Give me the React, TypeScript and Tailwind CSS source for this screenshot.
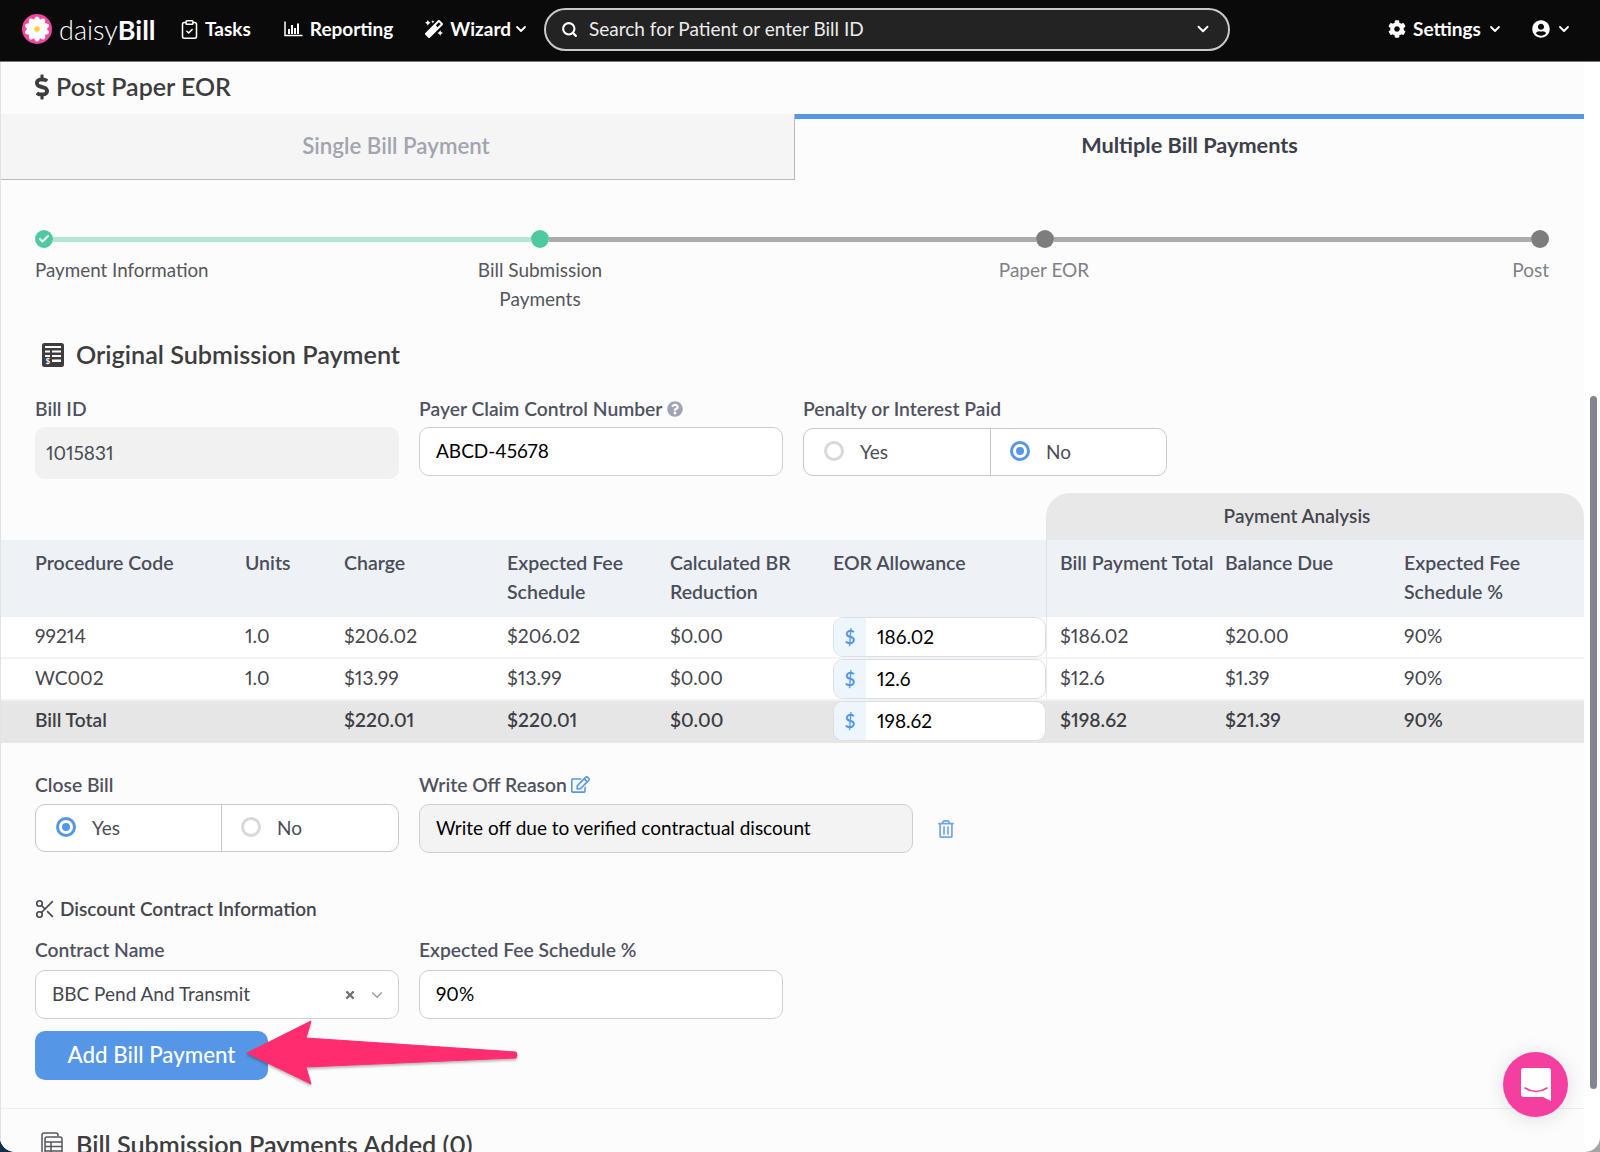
import * as React from 'react';
import { ChevronDown, ClipboardCheck, Scissors, Check } from 'lucide-react';
import { FaCog, FaUserCircle, FaMagic, FaQuestionCircle, FaRegEdit, FaRegTrashAlt, FaDollarSign, FaTimes } from 'react-icons/fa';
import { FiSearch } from 'react-icons/fi';

function DaisyLogo() {
  const petals = [0, 36, 72, 108, 144, 180, 216, 252, 288, 324];
  return (
    <svg width="30" height="30" viewBox="0 0 30 30" className="shrink-0">
      <circle cx="15" cy="15" r="15" fill="#f2459f" />
      {petals.map((a) => (
        <ellipse key={a} cx="15" cy="8" rx="3.2" ry="5.6" fill="#fff" transform={`rotate(${a} 15 15)`} />
      ))}
      <circle cx="15" cy="15" r="2.8" fill="#fbd13a" />
    </svg>
  );
}

function ReportingIcon() {
  return (
    <svg width="19" height="16" viewBox="0 0 19 16" fill="none" stroke="#fff" className="shrink-0">
      <path d="M1 0.5V14.5H18.5" strokeWidth="1.5" />
      <path d="M5 13V8M8 13V4M11 13V7M14 13V2.5" strokeWidth="2" />
    </svg>
  );
}

function LedgerIcon() {
  return (
    <svg width="22" height="24" viewBox="0 0 22 24" className="shrink-0">
      <rect x="0" y="0" width="22" height="24" rx="2.5" fill="#3d3d40" />
      <rect x="3" y="3" width="16" height="2" fill="#fcfcfc" />
      <rect x="3" y="7.5" width="5" height="2" fill="#fcfcfc" />
      <rect x="10" y="7.5" width="9" height="2" fill="#fcfcfc" />
      <rect x="10" y="12" width="9" height="2" fill="#fcfcfc" />
      <rect x="3" y="12" width="5" height="2" fill="#fcfcfc" />
      <rect x="10" y="16.5" width="9" height="2.5" fill="#fcfcfc" />
      <text x="3.5" y="21" fontSize="8" fontWeight="700" fill="#fcfcfc" fontFamily="Lato, sans-serif">$</text>
    </svg>
  );
}

function LedgerOutlineIcon() {
  return (
    <svg width="22" height="24" viewBox="0 0 22 24" fill="none" stroke="#55565e" strokeWidth="1.5" className="shrink-0">
      <path d="M1 20V3A2 2 0 0 1 3 1H15A2 2 0 0 1 17 3V4" />
      <rect x="4" y="5" width="17" height="18" rx="2" />
      <path d="M4 10H21M4 14.5H21M4 19H21M10 10V23" />
    </svg>
  );
}

function NavItem({ icon, label, chevron }: { icon: React.ReactNode; label: string; chevron?: string }) {
  return (
    <div className="flex items-center gap-[7px] text-white text-[19px] font-bold">
      {icon}
      <span>{label}</span>
      {chevron && <ChevronDown size={16} strokeWidth={2.75} className={chevron} />}
    </div>
  );
}

function Radio({ on }: { on?: boolean }) {
  return on ? (
    <span className="-mt-[3px] w-5 h-5 rounded-full border-[3px] border-[#5596e6] bg-white flex items-center justify-center shrink-0">
      <span className="w-2 h-2 rounded-full bg-[#5596e6]" />
    </span>
  ) : (
    <span className="-mt-[3px] w-5 h-5 rounded-full border-[3px] border-[#d8d8d8] bg-white shrink-0" />
  );
}

function RadioToggle({ yes, firstWidth, width }: { yes: boolean; firstWidth: string; width: string }) {
  return (
    <div className={`flex h-12 rounded-[10px] border border-[#c9c9cc] bg-white text-[19px] text-[#4a4c55] ${width}`}>
      <div className={`flex items-center gap-[16px] pl-[20px] border-r border-[#c9c9cc] ${firstWidth}`}>
        <Radio on={yes} />
        <span>Yes</span>
      </div>
      <div className="flex items-center gap-[16px] pl-[19px] flex-1">
        <Radio on={!yes} />
        <span>No</span>
      </div>
    </div>
  );
}

function Label({ children }: { children: React.ReactNode }) {
  return <div className="flex items-center h-[26px] pt-[1px] text-[19.3px] font-semibold text-[#50525f] leading-none">{children}</div>;
}

function TextInput({ value, className = '' }: { value: string; className?: string }) {
  return (
    <div className={`flex items-center pl-[16px] h-[49px] rounded-[10px] border border-[#cfcfd2] text-[19px] text-black ${className}`}>
      {value}
    </div>
  );
}

const cols = 'grid grid-cols-[35px_210px_99px_163px_163px_163px_213px_179px_179px_1fr]';

function Money({ value }: { value: string }) {
  return (
    <div className="flex h-10 rounded-[10px] border border-[#dedee2] bg-white overflow-hidden text-black text-[19px] font-normal w-[213px]">
      <span className="w-[32px] flex items-center justify-center bg-[#edf5fd] text-[#5596e6] font-semibold">$</span>
      <span className="flex items-center pl-[11px]">{value}</span>
    </div>
  );
}

type Row = { code: string; units: string; charge: string; fee: string; br: string; eor: string; total: string; bal: string; pct: string; sum?: boolean };

const rows: Row[] = [
  { code: '99214', units: '1.0', charge: '$206.02', fee: '$206.02', br: '$0.00', eor: '186.02', total: '$186.02', bal: '$20.00', pct: '90%' },
  { code: 'WC002', units: '1.0', charge: '$13.99', fee: '$13.99', br: '$0.00', eor: '12.6', total: '$12.6', bal: '$1.39', pct: '90%' },
  { code: 'Bill Total', units: '', charge: '$220.01', fee: '$220.01', br: '$0.00', eor: '198.62', total: '$198.62', bal: '$21.39', pct: '90%', sum: true },
];

function TableRow({ r }: { r: Row }) {
  return (
    <div className={`${cols} items-center h-[42px] text-[19.2px] ${r.sum ? 'bg-[#e6e6e6] pb-[2px] font-semibold text-[#3e3f46]' : 'bg-white border-b-2 border-[#f2f3f5] text-[#45464e]'}`}>
      <div />
      <div className="pb-[2px]">{r.code}</div>
      <div className="pb-[2px]">{r.units}</div>
      <div className="pb-[2px]">{r.charge}</div>
      <div className="pb-[2px]">{r.fee}</div>
      <div className="pb-[2px]">{r.br}</div>
      <Money value={r.eor} />
      <div className="pl-[13px] pb-[2px] self-stretch flex items-center border-l border-[#e9e9ec]">{r.total}</div>
      <div className="pb-[2px]">{r.bal}</div>
      <div className="pb-[2px]">{r.pct}</div>
    </div>
  );
}

export default function App() {
  return (
    <div className="relative w-[1600px] h-[1152px] overflow-hidden bg-white font-['Lato','Liberation_Sans',sans-serif] text-[#3d3d40] proportional-nums">
      {/* window corners behind the page */}
      <div className="absolute left-0 bottom-0 w-6 h-6 bg-[#123048]" />
      <div className="absolute right-0 bottom-0 w-6 h-6 bg-[#a5a5a8]" />

      <div className="relative h-full rounded-b-[15px] overflow-hidden bg-white">
        {/* top bar */}
        <header className="h-[62px] bg-[#0a0a0a] border-b border-[#777] flex items-center pl-[22px] pb-[3px]">
          <DaisyLogo />
          <div className="ml-[7px] w-[95px] text-white text-[27px] leading-none font-light">
            daisy<span className="font-bold">Bill</span>
          </div>
          <div className="ml-[27px]">
            <NavItem icon={<ClipboardCheck size={21} strokeWidth={1.75} className="shrink-0 -mx-[2px]" />} label="Tasks" />
          </div>
          <div className="ml-[33px]">
            <NavItem icon={<ReportingIcon />} label="Reporting" />
          </div>
          <div className="ml-[32px]">
            <NavItem icon={<FaMagic size={18} className="shrink-0" />} label="Wizard" chevron="-ml-[5px]" />
          </div>
          <div className="ml-[15px] w-[686px] h-[43px] rounded-full border-2 border-[#c9c9c9] bg-[#232323] flex items-center pl-[15px] pr-[16px] text-white text-[19px]">
            <FiSearch size={17} strokeWidth={3} />
            <span className="ml-[11px] flex-1 text-[#ececec]">Search for Patient or enter Bill ID</span>
            <ChevronDown size={18} strokeWidth={2.5} />
          </div>
          <div className="ml-[158px]">
            <NavItem icon={<FaCog size={18} className="shrink-0" />} label="Settings" chevron="-ml-[1px]" />
          </div>
          <div className="ml-[29px] flex items-center gap-[6px] text-white">
            <FaUserCircle size={18} />
            <ChevronDown size={16} strokeWidth={2.75} />
          </div>
        </header>

        <main className="w-[1584px] h-[1090px] overflow-hidden bg-[#fcfcfc] border-l border-[#e3e3e3]">
          <div className="-ml-px h-[52px] pl-[35px] pb-[3px] flex items-center gap-[7px] text-[25px] font-semibold text-[#3d3d40]">
            <FaDollarSign className="w-[14px] h-[26px] shrink-0" />
            <h1>Post Paper EOR</h1>
          </div>

          {/* tabs */}
          <div className="-ml-px flex h-[66px]">
            <div className="w-[795px] bg-[#f5f5f6] border-r border-b border-[#b9b9bd] pb-[2px] pr-[2px] flex items-center justify-center text-[22.3px] text-[#a2a4ae] font-semibold">
              Single Bill Payment
            </div>
            <div className="flex-1 border-t-[5px] border-[#5596e6] pb-[8px] flex items-center justify-center text-[21.7px] text-[#3d3f4b] font-bold">
              Multiple Bill Payments
            </div>
          </div>

          {/* stepper */}
          <div className="-ml-px pl-[35px] pt-[50px]">
            <div className="flex items-center h-[18px]">
              <span className="w-[18px] h-[18px] rounded-full bg-[#4fc9a0] flex items-center justify-center text-white shrink-0">
                <Check size={12} strokeWidth={4} />
              </span>
              <span className="w-[478px] h-[5px] bg-[#b5e5d3]" />
              <span className="w-[18px] h-[18px] rounded-full bg-[#4fc9a0] shrink-0" />
              <span className="w-[487px] h-[5px] bg-[#ababab]" />
              <span className="w-[18px] h-[18px] rounded-full bg-[#7d7d7d] shrink-0" />
              <span className="w-[477px] h-[5px] bg-[#ababab]" />
              <span className="w-[18px] h-[18px] rounded-full bg-[#7d7d7d] shrink-0" />
            </div>
            <div className="flex mt-[7px] text-[19px] leading-[29px] text-[#55565e]">
              <div className="w-[405px] text-[18.8px]">Payment Information</div>
              <div className="w-[200px] text-center">
                Bill Submission
                <br />
                Payments
              </div>
              <div className="ml-[304px] w-[200px] text-center text-[#808088]">Paper EOR</div>
              <div className="w-[405px] text-right text-[#808088]">Post</div>
            </div>
          </div>

          {/* original submission */}
          <div className="-ml-px pl-[42px] mt-[26px] flex items-center gap-[12px] h-[32px]">
            <LedgerIcon />
            <h2 className="text-[25.2px] font-semibold text-[#3d3d40]">Original Submission Payment</h2>
          </div>

          <div className="-ml-px pl-[35px] mt-[24px] flex gap-[20px]">
            <div className="w-[364px]">
              <Label>Bill ID</Label>
              <div className="mt-[6px] h-[52px] rounded-[10px] bg-[#f1f1f1] flex items-center pl-[11px] text-[19px] text-[#4a4c55]">1015831</div>
            </div>
            <div className="w-[364px]">
              <Label>
                Payer Claim Control Number
                <FaQuestionCircle size={16} className="ml-[5px] text-[#9fa3b3]" />
              </Label>
              <TextInput value="ABCD-45678" className="mt-[6px] bg-white" />
            </div>
            <div className="w-[364px]">
              <Label>Penalty or Interest Paid</Label>
              <div className="mt-[7px]">
                <RadioToggle yes={false} firstWidth="w-[187px]" width="w-[364px]" />
              </div>
            </div>
          </div>

          {/* payment table */}
          <div className="-ml-px mt-[14px] w-[1584px]">
            <div className="ml-[1046px] h-[47px] pr-[36px] rounded-t-[24px] bg-[#e8e8e8] flex items-center justify-center text-[19px] font-semibold text-[#45464e]">
              Payment Analysis
            </div>
            <div className={`${cols} h-[77px] bg-[#eef1f6] text-[19.5px] font-semibold leading-[28.5px] text-[#4a4d5a]`}>
              <div />
              <div className="pt-[9px]">Procedure Code</div>
              <div className="pt-[9px]">Units</div>
              <div className="pt-[9px]">Charge</div>
              <div className="pt-[9px]">
                Expected Fee
                <br />
                Schedule
              </div>
              <div className="pt-[9px]">
                Calculated BR
                <br />
                Reduction
              </div>
              <div className="pt-[9px]">EOR Allowance</div>
              <div className="pt-[9px] pl-[13px] border-l border-[#dfe1e6] whitespace-nowrap">Bill Payment Total</div>
              <div className="pt-[9px]">Balance Due</div>
              <div className="pt-[9px]">
                Expected Fee
                <br />
                Schedule %
              </div>
            </div>
            {rows.map((r) => (
              <TableRow key={r.code} r={r} />
            ))}
          </div>

          {/* close bill */}
          <div className="-ml-px pl-[35px] mt-[28px] flex gap-[20px]">
            <div className="w-[364px]">
              <Label>Close Bill</Label>
              <div className="mt-[7px]">
                <RadioToggle yes firstWidth="w-[186px]" width="w-[364px]" />
              </div>
            </div>
            <div className="w-[494px]">
              <Label>
                Write Off Reason
                <FaRegEdit size={19} className="ml-[4px] text-[#5596e6]" />
              </Label>
              <TextInput value="Write off due to verified contractual discount" className="mt-[7px] bg-[#f3f3f3]" />
            </div>
            <div className="pt-[49px] pl-[4px]">
              <FaRegTrashAlt size={18} className="text-[#6fa6ec]" />
            </div>
          </div>

          <div className="-ml-px pl-[34px] mt-[43px] flex items-center gap-[4px] h-[26px] text-[19px] font-semibold text-[#45464e]">
            <Scissors size={22} strokeWidth={1.75} className="shrink-0" />
            Discount Contract Information
          </div>

          <div className="-ml-px pl-[35px] mt-[14px] flex gap-[20px]">
            <div className="w-[364px]">
              <Label>Contract Name</Label>
              <div className="mt-[8px] h-[49px] rounded-[10px] border border-[#cfcfd2] bg-white flex items-center pl-[16px] pr-[12px] text-[19px] text-[#45464e]">
                <span className="flex-1 pb-[1px]">BBC Pend And Transmit</span>
                <FaTimes size={12} className="text-[#6f6f77] mr-[12px]" />
                <ChevronDown size={18} strokeWidth={1.75} className="text-[#9a9aa2]" />
              </div>
            </div>
            <div className="w-[364px]">
              <Label>Expected Fee Schedule %</Label>
              <TextInput value="90%" className="mt-[8px] bg-white" />
            </div>
          </div>

          <div className="-ml-px pl-[35px] mt-[12px]">
            <button className="w-[233px] h-[49px] pb-[2px] rounded-[10px] bg-[#5596e6] text-white text-[22.3px] font-medium">Add Bill Payment</button>
          </div>

          <div className="-ml-px mt-[28px] border-t border-[#eeeeee] pl-[41px] pt-[19px] flex items-center gap-[13px]">
            <LedgerOutlineIcon />
            <h2 className="text-[25.2px] leading-[32px] font-semibold text-[#3d3d40]">Bill Submission Payments Added (0)</h2>
          </div>
        </main>

        {/* screenshot annotation arrow */}
        <svg width="290" height="80" viewBox="0 0 290 80" className="absolute left-[240px] top-[1014px] drop-shadow-[0_2px_1px_rgba(0,0,0,0.25)]">
          <path d="M7 39L71 7L66 24L276 38Q278 41 276 44L66 53L71 70Z" fill="#ff2d6f" stroke="#ff2d6f" strokeWidth="1" strokeLinejoin="round" />
        </svg>

        {/* scrollbar thumb */}
        <div className="absolute left-[1590px] top-[396px] w-[7px] h-[693px] rounded-full bg-[#84868f]" />

        {/* chat launcher */}
        <div className="absolute left-[1503px] top-[1052px] w-[65px] h-[65px] rounded-full bg-[#f53fa0] shadow-[0_2px_20px_rgba(0,0,0,0.12)] flex items-center justify-center">
          <svg width="30" height="33" viewBox="0 0 30 33">
            <path d="M3 0H27A3 3 0 0 1 30 3V33L22 29H3A3 3 0 0 1 0 26V3A3 3 0 0 1 3 0Z" fill="#fff" />
            <path d="M4 20Q15 27 26 20" fill="none" stroke="#f53fa0" strokeWidth="1.6" strokeLinecap="round" />
          </svg>
        </div>
      </div>
    </div>
  );
}
